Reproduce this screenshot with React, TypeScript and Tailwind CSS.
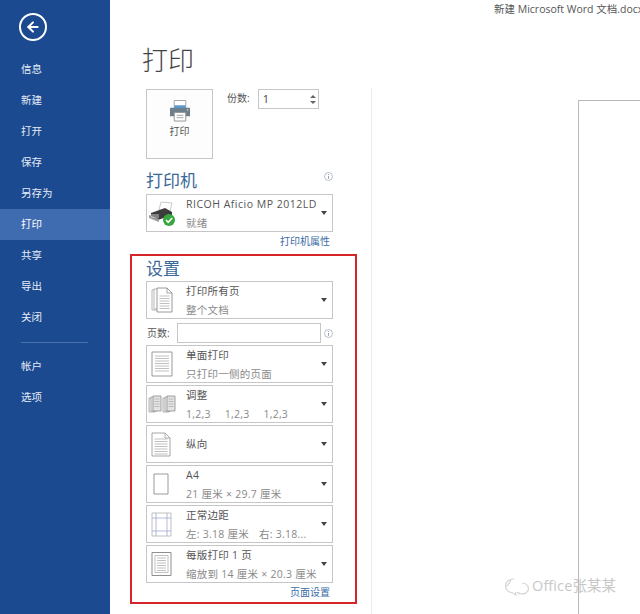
import type { ReactNode } from "react";
import { ArrowLeft } from "lucide-react";

const TOP_NAV = ["信息", "新建", "打开", "保存", "另存为", "打印", "共享", "导出", "关闭"];
const BOTTOM_NAV = ["帐户", "选项"];

function InfoIcon() {
  return (
    <svg viewBox="0 0 10 10" className="h-[9px] w-[9px]" fill="none">
      <circle cx="5" cy="5" r="4.4" stroke="#9aa7b8" strokeWidth="0.8" />
      <path d="M5 2.4v1M5 4.4v3.2" stroke="#7d8793" strokeWidth="0.9" />
    </svg>
  );
}

function Caret() {
  return <span className="h-0 w-0 border-x-[3px] border-t-[4px] border-x-transparent border-t-[#444]" />;
}

function Lines({ x, y, w, n, gap = 2.5 }: { x: number; y: number; w: number; n: number; gap?: number }) {
  return (
    <g stroke="#b0b0b0" strokeWidth="0.8">
      {Array.from({ length: n }).map((_, i) => (
        <path key={i} d={`M${x} ${y + i * gap}h${w}`} />
      ))}
    </g>
  );
}

function IconFrame({ children }: { children: ReactNode }) {
  return (
    <svg viewBox="0 0 28 28" className="h-7 w-7" fill="none">
      {children}
    </svg>
  );
}

function AllPagesIcon() {
  return (
    <IconFrame>
      <path d="M3 4h11v20H3z" stroke="#a5a5a5" strokeWidth="0.8" fill="#fff" />
      <path d="M5 3h11v20H5z" stroke="#a5a5a5" strokeWidth="0.8" fill="#fff" />
      <path d="M8 2h10l5 5v19H8z" stroke="#8f8f8f" strokeWidth="0.9" fill="#fff" />
      <path d="M18 2v5h5" stroke="#8f8f8f" strokeWidth="0.8" />
      <Lines x={10.5} y={10} w={10} n={6} />
    </IconFrame>
  );
}

function SingleSideIcon() {
  return (
    <IconFrame>
      <path d="M3 2h20v24H3z" stroke="#8f8f8f" strokeWidth="0.9" fill="#fff" />
      <Lines x={6} y={6} w={14} n={7} />
    </IconFrame>
  );
}

function CollateIcon() {
  return (
    <svg viewBox="0 0 28 20" className="ml-[-1px] h-[20px] w-[28px]" fill="none">
      <path d="M1 4h6v14H1z" stroke="#a0a0a0" strokeWidth="0.8" fill="#eee" />
      <path d="M3 3h6v14H3z" stroke="#a0a0a0" strokeWidth="0.8" fill="#eee" />
      <path d="M5 2h8v15H5z" stroke="#8a8a8a" strokeWidth="0.8" fill="#e4e4e4" />
      <Lines x={6.5} y={5} w={5} n={4} />
      <path d="M15 4h6v14h-6z" stroke="#a0a0a0" strokeWidth="0.8" fill="#eee" />
      <path d="M17 3h6v14h-6z" stroke="#a0a0a0" strokeWidth="0.8" fill="#eee" />
      <path d="M19 2h8v15h-8z" stroke="#8a8a8a" strokeWidth="0.8" fill="#e4e4e4" />
      <Lines x={20.5} y={5} w={5} n={4} />
    </svg>
  );
}

function PortraitIcon() {
  return (
    <IconFrame>
      <path d="M3 3h13l5 5v18H3z" stroke="#9c9c9c" strokeWidth="0.9" fill="#fff" />
      <path d="M16 3v5h5" stroke="#9c9c9c" strokeWidth="0.8" />
      <Lines x={5.5} y={9} w={13} n={7} />
    </IconFrame>
  );
}

function PaperIcon() {
  return (
    <IconFrame>
      <path d="M5 4h14v20H5z" stroke="#8f8f8f" strokeWidth="0.9" fill="#fff" />
    </IconFrame>
  );
}

function MarginIcon() {
  return (
    <IconFrame>
      <path d="M3 3h19v23H3z" stroke="#b0b0b0" strokeWidth="0.8" fill="#fff" />
      <path d="M7 3v23M18 3v23M3 8h19M3 21h19" stroke="#9fa8d0" strokeWidth="0.8" />
    </IconFrame>
  );
}

function PerSheetIcon() {
  return (
    <IconFrame>
      <path d="M3 2.5h19v23H3z" stroke="#8f8f8f" strokeWidth="1" fill="#fff" />
      <path d="M6 5.5h13v17H6z" stroke="#a8a8a8" strokeWidth="0.7" />
      <Lines x={8} y={8} w={9} n={6} />
    </IconFrame>
  );
}

function SelectRow({ icon, title, sub }: { icon: ReactNode; title: ReactNode; sub?: ReactNode }) {
  return (
    <div className="flex h-[38px] w-[187px] items-center border border-[#c6c6c6] bg-white">
      <div className="flex w-[39px] shrink-0 items-center pl-[2px]">{icon}</div>
      <div className="flex min-w-0 flex-1 flex-col gap-[5px] text-[10.5px] leading-[14px] tracking-[0.25px]">
        <span className="whitespace-nowrap text-[#555]">{title}</span>
        {sub && <span className="whitespace-nowrap text-[#8a8a8a]">{sub}</span>}
      </div>
      <div className="flex w-[13px] shrink-0 pl-[2px]">
        <Caret />
      </div>
    </div>
  );
}

function BigPrinterIcon() {
  return (
    <svg viewBox="0 1 24 23" className="h-[22px] w-6" fill="none">
      <path d="M6 1.5h12v8H6z" fill="#fff" stroke="#9a9a9a" strokeWidth="0.9" />
      <path d="M6 6.5h12v3H6z" fill="#5b9bd0" />
      <path d="M2.5 9h19a1 1 0 0 1 1 1v8h-21v-8a1 1 0 0 1 1-1z" fill="#6d7f8c" />
      <path d="M6 14h12v9H6z" fill="#fff" stroke="#8a8a8a" strokeWidth="0.9" />
      <path d="M8.5 17h7M8.5 19.5h7" stroke="#9a9a9a" strokeWidth="0.9" />
      <circle cx="20" cy="11.5" r="0.8" fill="#d5dde3" />
    </svg>
  );
}

function NetPrinterIcon() {
  return (
    <svg viewBox="0 0 30 28" className="ml-[-1px] h-[28px] w-[30px]" fill="none">
      <path d="M13 3l11 1-2 8-11-1z" fill="#fff" stroke="#bbb" strokeWidth="0.8" />
      <path d="M3 14l14-5 7 4v3l-14 5-7-4z" fill="#3c3c3c" />
      <path d="M1 16l10 4 0 3-10-4z" fill="#9a9a9a" />
      <path d="M3 16h8M3 18h8" stroke="#e8e8e8" strokeWidth="0.8" />
      <circle cx="21" cy="21" r="6" fill="#37a63f" />
      <path d="M18 21l2.2 2.3 4-4.3" stroke="#fff" strokeWidth="1.5" />
    </svg>
  );
}

function Watermark() {
  return (
    <div className="absolute left-[503px] top-[574px] flex items-center gap-[1px] text-[14.5px] leading-6 tracking-[0.1px] text-[#c8c8c8]">
      <svg viewBox="0 0 28 24" className="h-6 w-7" fill="none" stroke="#d6d6d6" strokeWidth="1.2">
        <path d="M11 5a8 7 0 1 0-1 14l3 2-.5-3" />
        <path d="M19 9a6.5 5.5 0 1 1-5 9" />
        <path d="M2 13c3-1 5-4 6-8" />
      </svg>
      <span>Office张某某</span>
    </div>
  );
}

export default function App() {
  return (
    <div
      className="relative flex h-[614px] w-[640px] overflow-hidden bg-white"
      style={{ fontFamily: '"Open Sans", "Noto Sans CJK SC", sans-serif' }}
    >
      {/* Sidebar */}
      <nav className="flex w-[110px] shrink-0 flex-col bg-[#1b4a91] text-[10.5px] text-[#e6ecf5]">
        <div className="flex h-[54px] items-start pl-[19px] pt-[13px]">
          <div className="flex h-7 w-7 items-center justify-center rounded-full border-2 border-white">
            <ArrowLeft size={16} strokeWidth={3} color="#fff" />
          </div>
        </div>
        {TOP_NAV.map((item) => (
          <div
            key={item}
            className={`flex h-[31px] items-center pl-[21px] ${item === "打印" ? "bg-[#3f6cb0] text-white" : ""}`}
          >
            {item}
          </div>
        ))}
        <div className="ml-[21px] mt-[9px] h-px w-[67px] bg-[#4a72ad]" />
        <div className="mt-[8px]">
          {BOTTOM_NAV.map((item) => (
            <div key={item} className="flex h-[31px] items-center pl-[21px]">
              {item}
            </div>
          ))}
        </div>
      </nav>

      {/* Settings column */}
      <div className="flex w-[262px] shrink-0 flex-col">
        <div className="h-[88px] pl-[32px] pt-[41px] text-[26px] font-light leading-[38px] text-[#444]">打印</div>
        <div className="flex-1 border-r border-[#ececec] pt-px">
          <div className="ml-[36px] flex items-start">
            <div className="flex h-[70px] w-[67px] flex-col items-center border border-[#c6c6c6] bg-[#fdfdfd] pt-[10px]">
              <BigPrinterIcon />
              <span className="mt-[2px] text-[10px] leading-[14px] text-[#555]">打印</span>
            </div>
            <span className="ml-[14px] mt-[2px] text-[10px] leading-[14px] text-[#555]">份数:</span>
            <div className="ml-[8px] flex h-[20px] w-[61px] items-center justify-between border border-[#c6c6c6] pl-[4px] pr-[2px] text-[11px] text-[#444]">
              <span>1</span>
              <div className="flex flex-col gap-[3px]">
                <span className="h-0 w-0 border-x-[3px] border-b-[3px] border-x-transparent border-b-[#666]" />
                <span className="h-0 w-0 border-x-[3px] border-t-[3px] border-x-transparent border-t-[#666]" />
              </div>
            </div>
          </div>

          <div className="ml-[36px] mt-[10px] w-[187px]">
            <div className="flex h-[25px] items-start justify-between">
              <span className="text-[17px] leading-6 text-[#3a6899]">打印机</span>
              <span className="mt-[3px] flex">
                <InfoIcon />
              </span>
            </div>
            <SelectRow
              icon={<NetPrinterIcon />}
              title={<span className="tracking-[0.5px]">RICOH Aficio MP 2012LD</span>}
              sub="就绪"
            />
            <div className="mr-[3px] mt-[2px] text-right text-[10px] leading-[14px] text-[#3a6ea8]">打印机属性</div>
          </div>

          <section className="ml-[20px] mt-[6px] h-[350px] w-[227px] border-2 border-[#d7242a] pl-[14px] pt-px">
            <div className="h-[24px] text-[17px] leading-6 text-[#3a6899]">设置</div>
            <SelectRow icon={<AllPagesIcon />} title="打印所有页" sub="整个文档" />
            <div className="mt-[4px] flex h-[20px] w-[187px] items-center text-[10px] text-[#555]">
              <span className="w-[31px] pl-px">页数:</span>
              <span className="h-[20px] w-[144px] border border-[#c6c6c6]" />
              <span className="ml-[3px] flex">
                <InfoIcon />
              </span>
            </div>
            <div className="mt-[2px] flex flex-col gap-[2px]">
              <SelectRow icon={<SingleSideIcon />} title="单面打印" sub="只打印一侧的页面" />
              <SelectRow
                icon={<CollateIcon />}
                title="调整"
                sub={
                  <span className="inline-flex gap-[14px]">
                    <span>1,2,3</span>
                    <span>1,2,3</span>
                    <span>1,2,3</span>
                  </span>
                }
              />
              <SelectRow icon={<PortraitIcon />} title="纵向" />
              <SelectRow icon={<PaperIcon />} title="A4" sub="21 厘米 × 29.7 厘米" />
              <SelectRow
                icon={<MarginIcon />}
                title="正常边距"
                sub={
                  <span className="inline-flex gap-[10px]">
                    <span>左: 3.18 厘米</span>
                    <span>右: 3.18...</span>
                  </span>
                }
              />
              <SelectRow icon={<PerSheetIcon />} title="每版打印 1 页" sub="缩放到 14 厘米 × 20.3 厘米" />
            </div>
            <div className="mr-[3px] mt-[2px] w-[184px] text-right text-[10px] leading-[14px] text-[#3a6ea8]">页面设置</div>
          </section>
        </div>
      </div>

      {/* Preview column */}
      <div className="flex min-w-0 flex-1 flex-col">
        <div className="h-[100px] whitespace-nowrap pl-[122px] pt-[2px] text-[10.5px] leading-[14px] text-[#555]">
          新建 Microsoft Word 文档.docx
        </div>
        <div className="ml-[206px] flex-1 border-l border-t border-[#b8b8b8] bg-white" />
      </div>

      <Watermark />
    </div>
  );
}
